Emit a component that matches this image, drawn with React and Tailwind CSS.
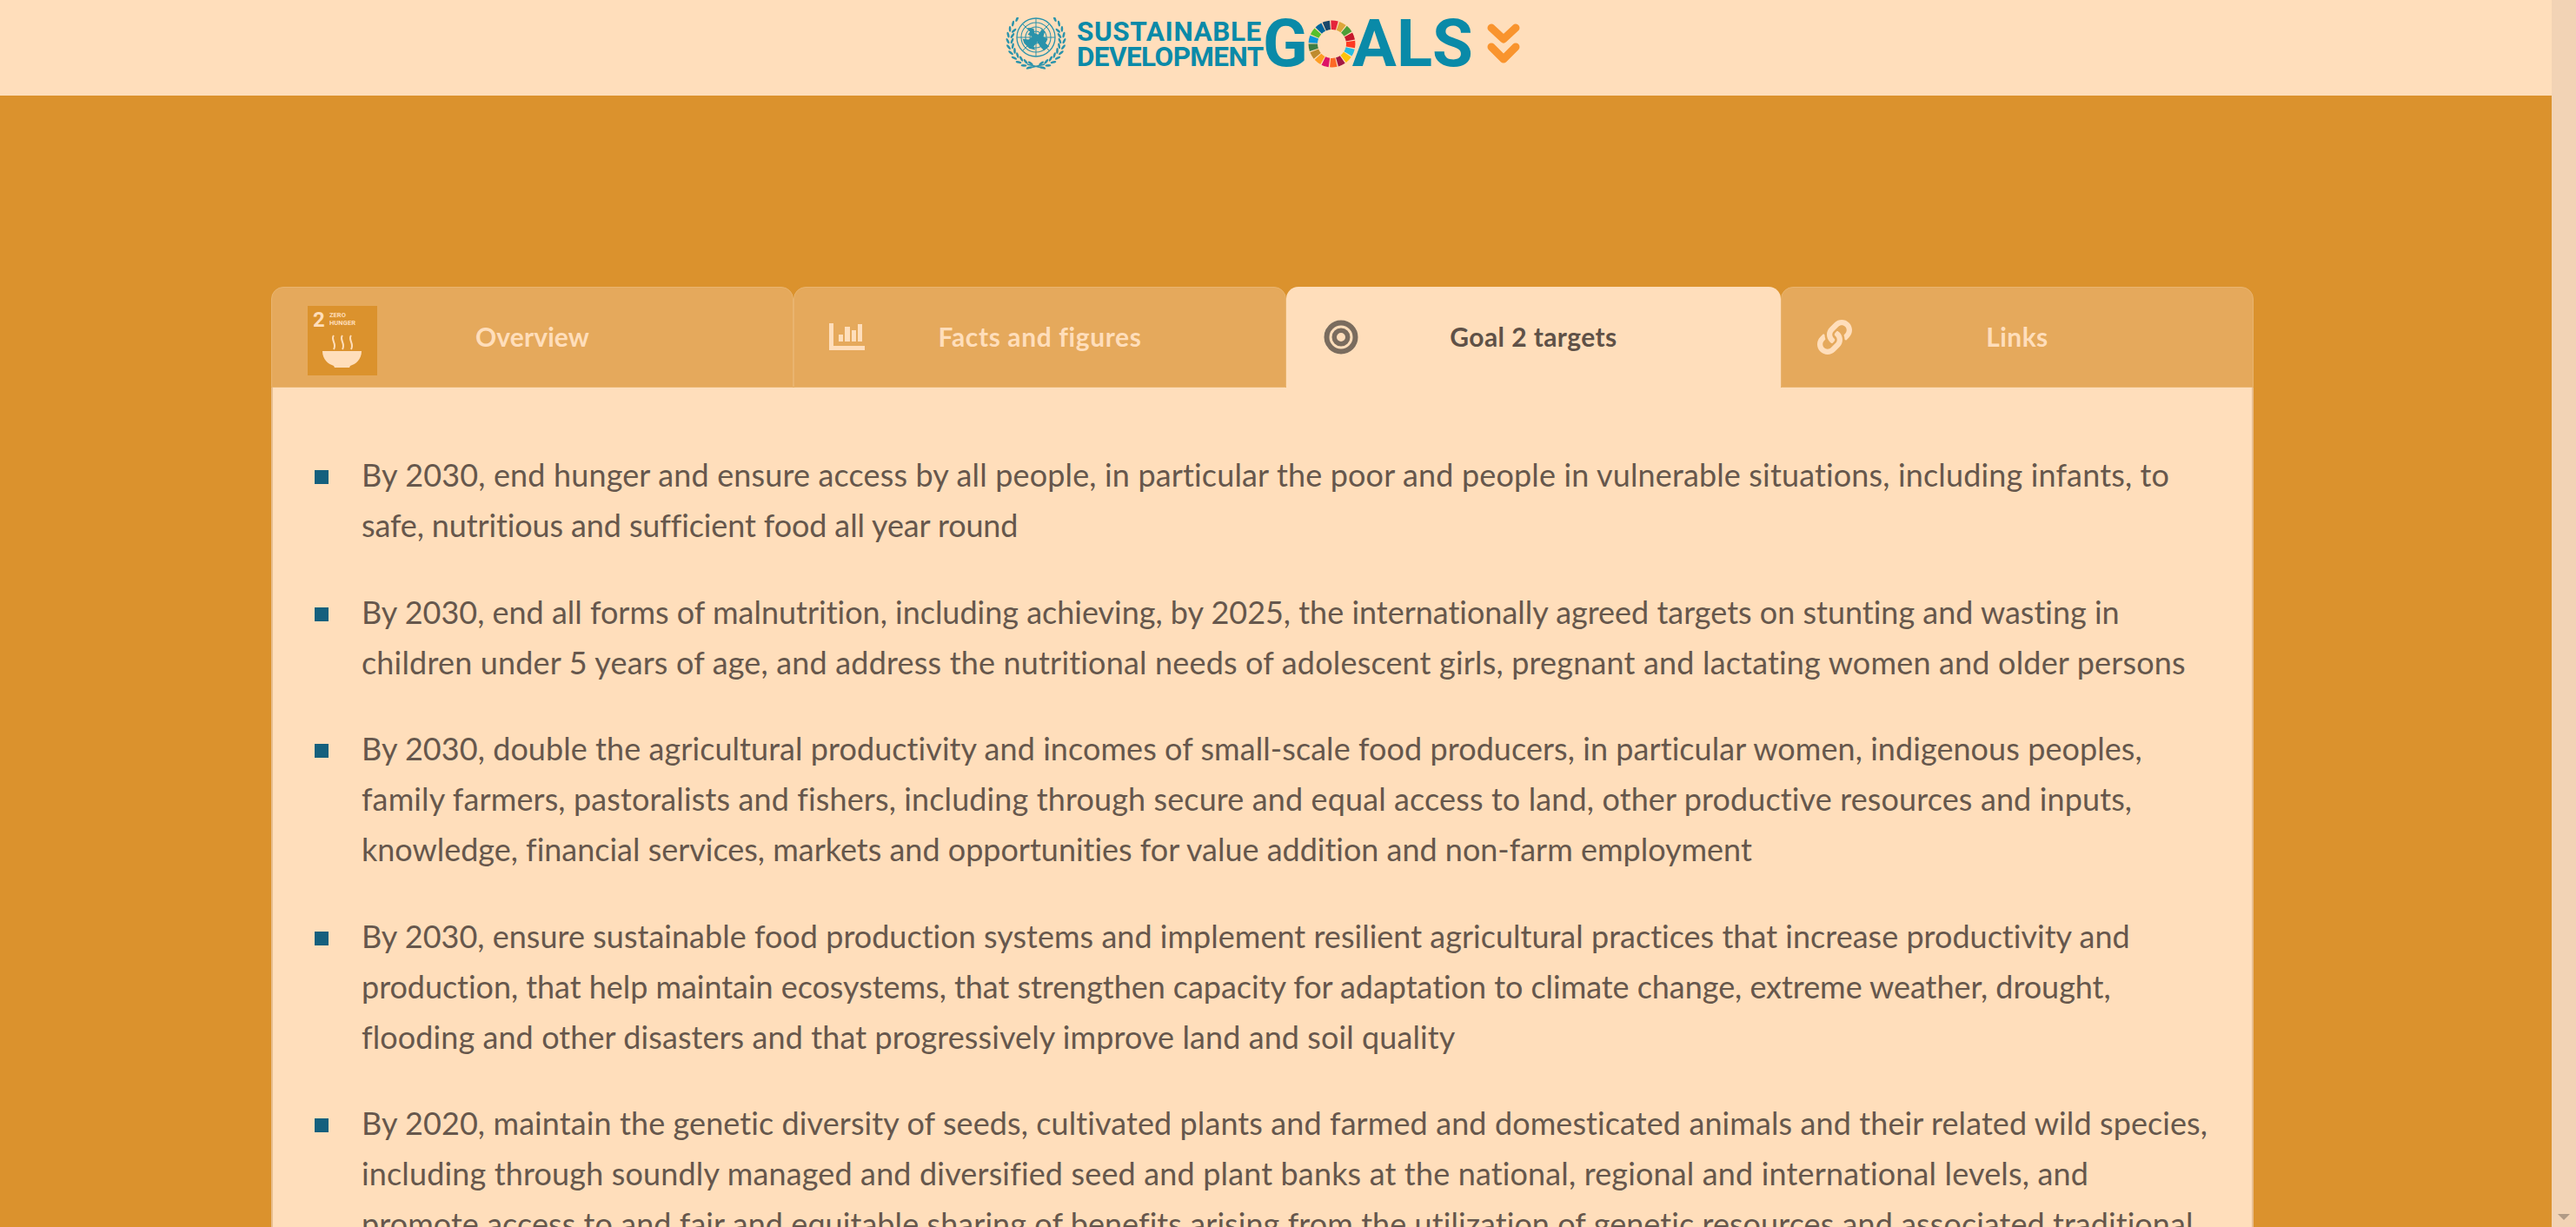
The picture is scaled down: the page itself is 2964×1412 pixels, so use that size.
import React from "react";
import { FaLink } from "react-icons/fa";

const sdg = ["#E5243B","#DDA63A","#4C9F38","#C5192D","#FF3A21","#26BDE2","#FCC30B","#A21942","#FD6925","#DD1367","#FD9D24","#BF8B2E","#3F7E44","#0A97D9","#56C02B","#00689D","#19486A"];

function pt(r, a) {
  const t = ((a - 90) * Math.PI) / 180;
  return [50 + r * Math.cos(t), 50 + r * Math.sin(t)];
}
function Wheel() {
  return (
    <svg viewBox="0 0 100 100" className="w-[55px] h-[55px] shrink-0">
      {sdg.map((c, i) => {
        const a0 = -4 + i * (360 / 17) + 1.5;
        const a1 = -4 + (i + 1) * (360 / 17) - 1.5;
        const [x0, y0] = pt(49, a0), [x1, y1] = pt(49, a1), [x2, y2] = pt(30, a1), [x3, y3] = pt(30, a0);
        return <path key={i} fill={c} d={`M${x0} ${y0}A49 49 0 0 1 ${x1} ${y1}L${x2} ${y2}A30 30 0 0 0 ${x3} ${y3}Z`} />;
      })}
    </svg>
  );
}
function UNEmblem() {
  const c = "#2A93AB";
  const leaves = [];
  for (let i = 0; i < 11; i++) {
    const deg = -48 + i * 12.5;
    const a = (deg * Math.PI) / 180;
    [[32.5, 24], [27.5, -24]].forEach(([r, tilt]) => {
      if (r < 30 && deg < -25) return;
      const dx = r * Math.cos(a);
      const y = 26 + r * Math.sin(a);
      leaves.push([36 + dx, y, deg + tilt], [36 - dx, y, -deg - tilt]);
    });
  }
  return (
    <svg viewBox="0 0 72 60" className="w-[72px] h-[60px] shrink-0">
      <g fill="none" stroke={c}>
        <circle cx="36" cy="23" r="22" strokeWidth="1.300" />
        <circle cx="36" cy="23" r="17" strokeWidth="1.100" />
        <circle cx="36" cy="23" r="12" strokeWidth="1.100" />
        <circle cx="36" cy="23" r="7" strokeWidth="1.100" />
        <path d="M36 1V45M14 23H58M20.400 7.400L51.600 38.600M51.600 7.400L20.400 38.600" strokeWidth="1" />
      </g>
      <path fill={c} transform="translate(5.400 3.500) scale(0.85)" d="M26 10l7 1 1 6 5 2 5-7 4 3-2 7 6 3-3 6 5 4-7 6-5-5-4-7-5 6 2 5-8-2-7-7-2-6 8 1 5-4-6-3 3-4-4-4z" />
      {leaves.map(([x, y, rot], i) => (
        <ellipse key={i} cx={x} cy={y} rx="1.300" ry="3.400" fill={c} transform={`rotate(${rot} ${x} ${y})`} />
      ))}
      <path d="M25 59L46 54M47 59L26 54" stroke={c} strokeWidth="1.500" />
    </svg>
  );
}
function Chevrons() {
  return (
    <svg viewBox="0 0 38 46" className="w-[38px] h-[46px] shrink-0 ml-[16px]" fill="none" stroke="#F9942E" strokeWidth="9" strokeLinecap="round" strokeLinejoin="round">
      <path d="M5 5L19 18L33 5" />
      <path d="M5 27L19 41L33 27" />
    </svg>
  );
}
function BarsIcon() {
  return (
    <svg viewBox="0 0 41 31" className="w-[41px] h-[31px] block" fill="#FFDEBB">
      <path d="M0 0H5V26H41V31H0Z" />
      <rect x="11" y="13" width="5" height="8" />
      <rect x="18" y="4" width="6" height="17" />
      <rect x="26" y="8" width="5" height="13" />
      <rect x="33" y="1" width="5" height="20" />
    </svg>
  );
}
function TargetIcon() {
  return (
    <svg viewBox="0 0 40 40" className="w-[40px] h-[40px] block" fill="none" stroke="#7A6C5E">
      <circle cx="20" cy="20" r="16.500" strokeWidth="6" />
      <circle cx="20" cy="20" r="7.750" strokeWidth="5.500" />
    </svg>
  );
}
function GoalTile() {
  return (
    <div className="w-[80px] h-[80px] bg-[#DB922D] flex flex-col text-[#FFDEBB] px-[6px] pt-[3px]">
      <div className="flex items-start gap-[5px] h-[30px]">
        <span className="text-[24px] leading-[26px] font-bold font-['Roboto',sans-serif] inline-block">2</span>
        <span className="text-[7.500px] leading-[9px] pt-[3px] font-['Roboto',sans-serif]">ZERO<br />HUNGER</span>
      </div>
      <svg viewBox="0 0 68 44" className="w-[68px] h-[44px]">
        <path d="M24 1c-4 5 4 9 0 16M34 1c-4 5 4 9 0 16M44 1c-4 5 4 9 0 16" fill="none" stroke="#FFDEBB" strokeWidth="2" />
        <path d="M11 19H56C56 29 49 34 43 36L42 38H25L24 36C18 34 11 29 11 19Z" fill="#FFDEBB" />
      </svg>
    </div>
  );
}

const tabs = [
  { w: "w-[601px] tracking-[0.1px]", label: "Overview", icon: <GoalTile />, iconCls: "left-[41px] top-[21px]" },
  { w: "w-[567px] tracking-[0.6px]", label: "Facts and figures", icon: <BarsIcon />, iconCls: "left-[40px] top-[41px]" },
  { w: "w-[569px] tracking-[0.4px]", label: "Goal 2 targets", icon: <TargetIcon />, iconCls: "left-[43px] top-[38px]", active: true },
  { w: "w-[544px] tracking-[0.4px]", label: "Links", icon: <FaLink className="w-[40px] h-[40px] text-[#FFDEBB] block" />, iconCls: "left-[41px] top-[37px]" },
];

const items = [
  [["By 2030, end hunger and ensure access by all people, in particular the poor and people in vulnerable situations, including infants, to", "tracking-[0.144px]"], ["safe, nutritious and sufficient food all year round", "tracking-[-0.13px]"]],
  [["By 2030, end all forms of malnutrition, including achieving, by 2025, the internationally agreed targets on stunting and wasting in", "tracking-[-0.014px]"], ["children under 5 years of age, and address the nutritional needs of adolescent girls, pregnant and lactating women and older persons", "tracking-[0.17px]"]],
  [["By 2030, double the agricultural productivity and incomes of small-scale food producers, in particular women, indigenous peoples,", "tracking-[0.06px]"], ["family farmers, pastoralists and fishers, including through secure and equal access to land, other productive resources and inputs,", "tracking-[0.115px]"], ["knowledge, financial services, markets and opportunities for value addition and non-farm employment", "tracking-[-0.02px]"]],
  [["By 2030, ensure sustainable food production systems and implement resilient agricultural practices that increase productivity and", "tracking-[0.014px]"], ["production, that help maintain ecosystems, that strengthen capacity for adaptation to climate change, extreme weather, drought,", "tracking-[-0.05px]"], ["flooding and other disasters and that progressively improve land and soil quality", "tracking-[0.08px]"]],
  [["By 2020, maintain the genetic diversity of seeds, cultivated plants and farmed and domesticated animals and their related wild species,", "tracking-[0.09px]"], ["including through soundly managed and diversified seed and plant banks at the national, regional and international levels, and", "tracking-[0.145px]"], ["promote access to and fair and equitable sharing of benefits arising from the utilization of genetic resources and associated traditional", "tracking-[0.06px]"], ["knowledge, as internationally agreed", "tracking-[0.1px]"]],
];

export default function App() {
  return (
    <div className="flex h-screen overflow-hidden bg-[#DB922D] font-['Lato',sans-serif]">
      <div className="flex-1 min-w-0 overflow-hidden">
        <header className="h-[110px] bg-[#FFDEBB] flex items-center pl-[1156px] pb-[11px] font-['Roboto',sans-serif] font-bold text-[#0A8AA8]">
          <UNEmblem />
          <div className="ml-[11px] pt-[2px] text-[31.500px] leading-[29px] w-[214px] whitespace-nowrap">
            <div className="tracking-[0.6px]">SUSTAINABLE</div>
            <div className="tracking-[-0.6px]">DEVELOPMENT</div>
          </div>
          <div className="flex items-center text-[76px] leading-none pt-[1px]">
            <span>G</span>
            <Wheel />
            <span className="-ml-[4px]">ALS</span>
          </div>
          <Chevrons />
        </header>
        <main className="ml-[312px] w-[2281px] pt-[220px]">
          <div className="flex h-[116px]">
            {tabs.map((t) => (
              <div
                key={t.label}
                className={t.w + " relative flex items-center justify-center rounded-t-[14px] text-[30px] font-bold pb-[2px] " + (t.active ? "bg-[#FFDEBB] text-[#5F5147]" : "bg-[#E5A95C] text-[#FFDEBB] border border-[#E9B46F]")}
              >
                <span className={"absolute " + t.iconCls}>{t.icon}</span>
                {t.label}
              </div>
            ))}
          </div>
          <div className="bg-[#FFDEBB] border-x-2 border-[#E8BE8F] pl-[48px] pt-[71px] text-[#66574C] text-[36px] leading-[58px]">
            {items.map((lines, i) => (
              <div key={i} className="flex mb-[41.500px]">
                <span className="w-[16px] h-[16px] mt-[24px] bg-[#14607D] shrink-0 mr-[38px]" />
                <div>
                  {lines.map(([l, tr]) => (
                    <div key={l} className={"whitespace-nowrap " + tr}>{l}</div>
                  ))}
                </div>
              </div>
            ))}
          </div>
        </main>
      </div>
      <div className="w-[28px] shrink-0 bg-[#F2D3B5] flex items-end justify-center pb-[8px]">
        <span className="w-0 h-0 border-x-[7px] border-x-transparent border-t-[7px] border-t-[#B09A85]" />
      </div>
    </div>
  );
}
